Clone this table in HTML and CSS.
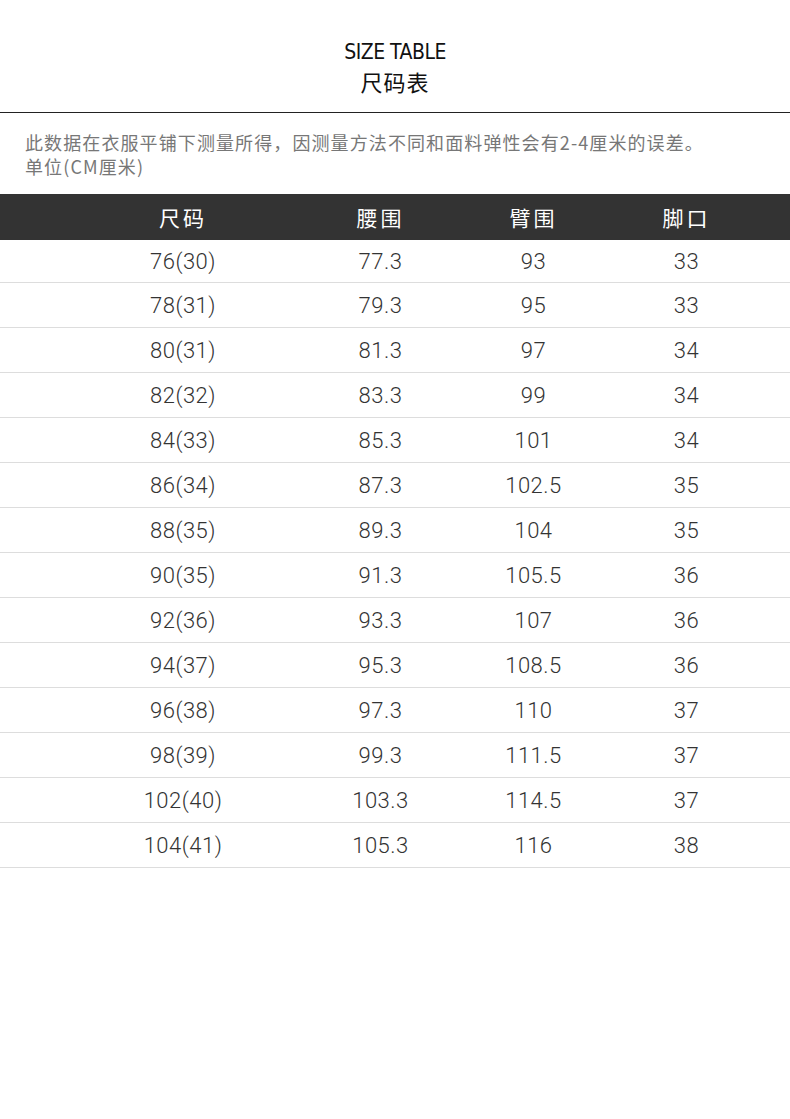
FILE: index.html
```html
<!DOCTYPE html>
<html lang="zh">
<head>
<meta charset="utf-8">
<title>尺码表</title>
<link rel="stylesheet" href="styles.css">
</head>
<body>
<div class="page">
  <header class="head">
    <div class="title-en">SIZE TABLE</div>
    <div class="title-cn">尺码表</div>
  </header>
  <div class="note">
    <p>此数据在衣服平铺下测量所得，因测量方法不同和面料弹性会有2-4厘米的误差。</p>
    <p>单位(CM厘米)</p>
  </div>
  <div class="table">
    <div class="row thead"><span>尺码</span><span>腰围</span><span>臂围</span><span>脚口</span></div>
    <div class="row first"><span>76(30)</span><span>77.3</span><span>93</span><span>33</span></div>
    <div class="row"><span>78(31)</span><span>79.3</span><span>95</span><span>33</span></div>
    <div class="row"><span>80(31)</span><span>81.3</span><span>97</span><span>34</span></div>
    <div class="row"><span>82(32)</span><span>83.3</span><span>99</span><span>34</span></div>
    <div class="row"><span>84(33)</span><span>85.3</span><span>101</span><span>34</span></div>
    <div class="row"><span>86(34)</span><span>87.3</span><span>102.5</span><span>35</span></div>
    <div class="row"><span>88(35)</span><span>89.3</span><span>104</span><span>35</span></div>
    <div class="row"><span>90(35)</span><span>91.3</span><span>105.5</span><span>36</span></div>
    <div class="row"><span>92(36)</span><span>93.3</span><span>107</span><span>36</span></div>
    <div class="row"><span>94(37)</span><span>95.3</span><span>108.5</span><span>36</span></div>
    <div class="row"><span>96(38)</span><span>97.3</span><span>110</span><span>37</span></div>
    <div class="row"><span>98(39)</span><span>99.3</span><span>111.5</span><span>37</span></div>
    <div class="row"><span>102(40)</span><span>103.3</span><span>114.5</span><span>37</span></div>
    <div class="row"><span>104(41)</span><span>105.3</span><span>116</span><span>38</span></div>
  </div>
</div>
</body>
</html>
```

FILE: styles.css
```css
html, body {
  margin: 0;
  padding: 0;
  background: #fff;
}
body {
  font-family: "Liberation Sans", "Noto Sans CJK SC", sans-serif;
  color: #333;
}
.page {
  width: 790px;
  height: 1119px;
  overflow: hidden;
}
.head {
  padding-top: 39px;
  height: 73px;
  border-bottom: 1px solid #222;
  display: flex;
  flex-direction: column;
  align-items: center;
}
.title-en {
  font-family: "DejaVu Sans", sans-serif;
  font-stretch: condensed;
  font-size: 21px;
  line-height: 26px;
  color: #111;
  letter-spacing: -0.5px;
}
.title-cn {
  font-family: "Noto Sans CJK SC", sans-serif;
  font-size: 22px;
  line-height: 32px;
  color: #111;
  letter-spacing: 1px;
}
.note {
  padding: 17px 25px 0;
  height: 64px;
  color: #777;
  font-family: "Noto Sans CJK SC", sans-serif;
  font-size: 18px;
  line-height: 24px;
  letter-spacing: 1.1px;
}
.note p {
  margin: 0;
}
.table {
  display: flex;
  flex-direction: column;
}
.row {
  display: grid;
  grid-template-columns: 242px 153px 153px 153px;
  padding-left: 62px;
  height: 45px;
  box-sizing: border-box;
  border-bottom: 1px solid #ddd;
  align-items: center;
  font-family: Roboto, "Liberation Sans", sans-serif;
  font-weight: 300;
  font-size: 22px;
  letter-spacing: 0.5px;
  color: #333;
}
.row.first {
  height: 43px;
}
.row span {
  text-align: center;
}
.thead {
  height: 46px;
  background: #333;
  color: #fff;
  border-bottom: none;
  font-family: "Noto Sans CJK SC", sans-serif;
  font-weight: 400;
  font-size: 21px;
  letter-spacing: 3px;
}
```
